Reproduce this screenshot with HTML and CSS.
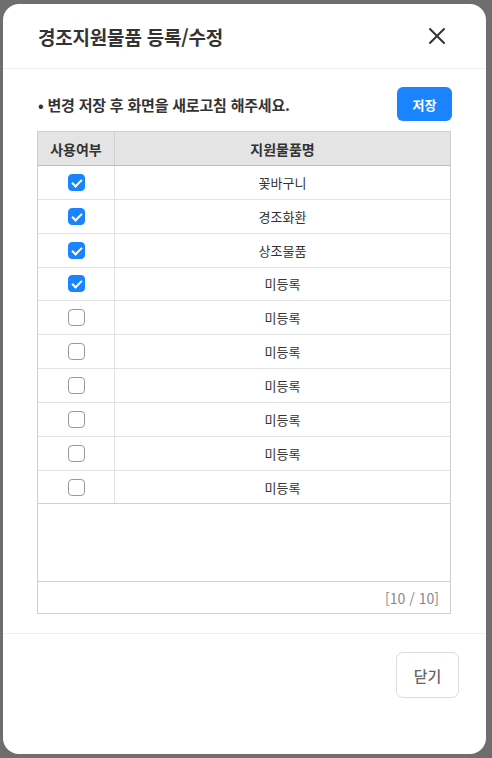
FILE: index.html
```html
<!DOCTYPE html>
<html lang="ko">
<head>
<meta charset="utf-8">
<link rel="stylesheet" href="styles.css">
</head>
<body>
<div class="modal">
  <div class="modal-head">
    <h1 class="title">경조지원물품 등록/수정</h1>
    <button class="close" aria-label="닫기">
      <svg width="18" height="18" viewBox="0 0 18 18"><path d="M2 2L16 16M16 2L2 16" stroke="#333" stroke-width="2" stroke-linecap="round"/></svg>
    </button>
  </div>
  <div class="modal-body">
    <div class="note-row">
      <p class="note">• 변경 저장 후 화면을 새로고침 해주세요.</p>
      <button class="btn-save">저장</button>
    </div>
    <div class="grid">
      <div class="grid-head">
        <div class="hcell">사용여부</div>
        <div class="hcell">지원물품명</div>
      </div>
      <div class="grid-rows">
        <div class="row"><div class="cell"><span class="cb on"></span></div><div class="cell">꽃바구니</div></div>
        <div class="row"><div class="cell"><span class="cb on"></span></div><div class="cell">경조화환</div></div>
        <div class="row"><div class="cell"><span class="cb on"></span></div><div class="cell">상조물품</div></div>
        <div class="row"><div class="cell"><span class="cb on"></span></div><div class="cell">미등록</div></div>
        <div class="row"><div class="cell"><span class="cb"></span></div><div class="cell">미등록</div></div>
        <div class="row"><div class="cell"><span class="cb"></span></div><div class="cell">미등록</div></div>
        <div class="row"><div class="cell"><span class="cb"></span></div><div class="cell">미등록</div></div>
        <div class="row"><div class="cell"><span class="cb"></span></div><div class="cell">미등록</div></div>
        <div class="row"><div class="cell"><span class="cb"></span></div><div class="cell">미등록</div></div>
        <div class="row"><div class="cell"><span class="cb"></span></div><div class="cell">미등록</div></div>
      </div>
      <div class="grid-empty"></div>
      <div class="grid-foot">[10 / 10]</div>
    </div>
  </div>
  <div class="modal-foot">
    <button class="btn-close">닫기</button>
  </div>
</div>
</body>
</html>
```

FILE: styles.css
```css
* { box-sizing: border-box; }
html, body { margin: 0; padding: 0; }
body {
  background: #6e6e6e;
  width: 492px;
  height: 758px;
  padding: 4px 0 0 3px;
  font-family: "Noto Sans CJK KR", "Noto Sans", sans-serif;
  color: #333;
  overflow: hidden;
}
.modal {
  width: 483px;
  height: 750px;
  background: #fff;
  border-radius: 16px;
  display: flex;
  flex-direction: column;
}
.modal-head {
  height: 65px;
  border-bottom: 1px solid #f0f0f0;
  display: flex;
  align-items: center;
  justify-content: space-between;
  padding: 0 40px 0 35px;
}
.title {
  margin: 0;
  font-size: 19px;
  font-weight: 700;
  color: #333;
  letter-spacing: -0.2px;
}
.close {
  border: 0;
  background: none;
  padding: 0;
  width: 18px;
  height: 18px;
  display: flex;
}
.modal-body {
  padding: 18px 35px 19px 34px;
  border-bottom: 1px solid #f0f0f0;
}
.note-row {
  display: flex;
  align-items: center;
  justify-content: space-between;
  height: 34px;
  margin-bottom: 10px;
}
.note {
  margin: 0;
  font-size: 15px;
  font-weight: 700;
  color: #333;
  letter-spacing: -0.2px;
  padding-left: 1px;
}
.btn-save {
  width: 55px;
  height: 34px;
  border: 0;
  border-radius: 6px;
  background: #1a84ff;
  color: #fff;
  font-family: inherit;
  font-size: 13px;
  font-weight: 700;
  margin-right: -1px;
}
.grid {
  border: 1px solid #cfcfcf;
  width: 414px;
}
.grid-head {
  display: grid;
  grid-template-columns: 77px 1fr;
  height: 34px;
  background: #e4e4e4;
  border-bottom: 1px solid #bdbdbd;
}
.hcell {
  display: flex;
  align-items: center;
  justify-content: center;
  font-size: 14px;
  font-weight: 700;
  color: #333;
}
.hcell:first-child { border-right: 1px solid #cfcfcf; }
.row {
  display: grid;
  grid-template-columns: 77px 1fr;
  height: 33.85px;
  border-bottom: 1px solid #e2e2e2;
}
.row:last-child { border-bottom: 1px solid #cfcfcf; }
.cell {
  display: flex;
  align-items: center;
  justify-content: center;
  font-size: 13px;
  color: #333;
}
.cell:first-child { border-right: 1px solid #e2e2e2; }
.cb {
  width: 17px;
  height: 17px;
  border: 1px solid #9a9a9a;
  border-radius: 4px;
  background: #fff;
  position: relative;
}
.cb.on {
  background: #1a84ff;
  border-color: #1a84ff;
}
.cb.on::after {
  content: "";
  position: absolute;
  left: 5px;
  top: 2px;
  width: 4px;
  height: 8px;
  border: solid #fff;
  border-width: 0 2px 2px 0;
  transform: rotate(45deg);
}
.grid-empty {
  height: 78px;
  border-bottom: 1px solid #cfcfcf;
}
.grid-foot {
  height: 31px;
  display: flex;
  align-items: center;
  justify-content: flex-end;
  padding-right: 11px;
  font-size: 14px;
  color: #888;
}
.modal-foot {
  display: flex;
  justify-content: flex-end;
  padding: 18px 27px 0 0;
}
.btn-close {
  width: 63px;
  height: 46px;
  border: 1px solid #dcdcdc;
  border-radius: 7px;
  background: #fff;
  color: #666;
  font-family: inherit;
  font-size: 15px;
  font-weight: 500;
}
```
